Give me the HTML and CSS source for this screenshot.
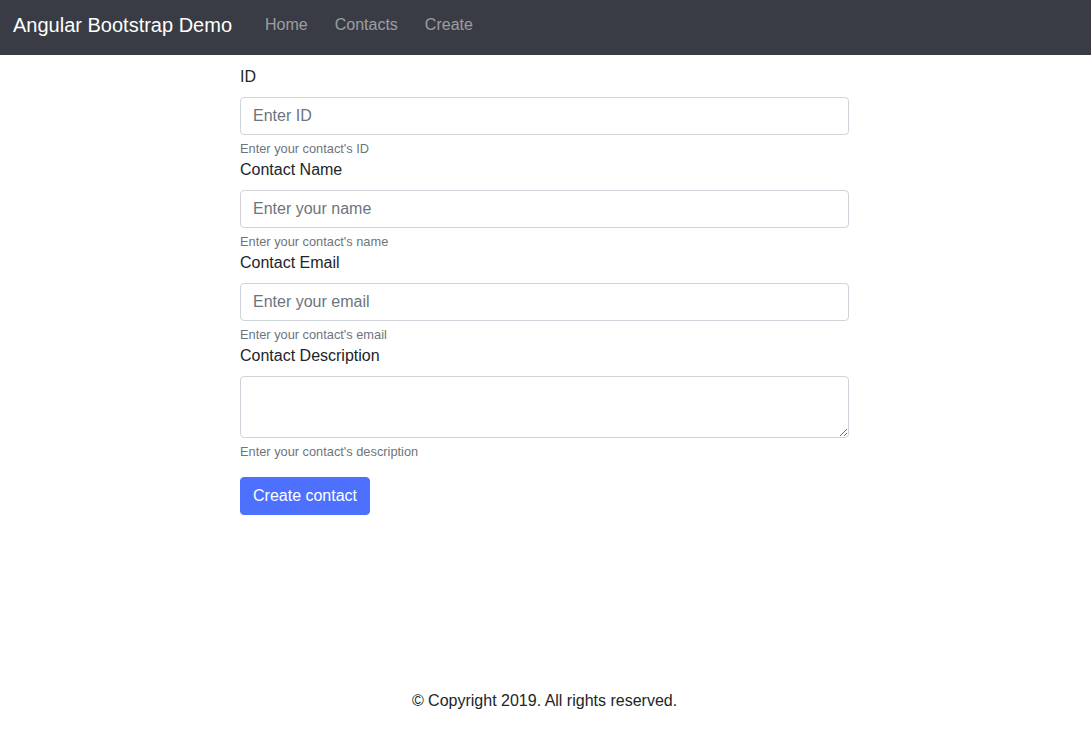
FILE: index.html
```html
<!DOCTYPE html>
<html lang="en">
<head>
<meta charset="utf-8">
<title>Angular Bootstrap Demo</title>
<link rel="stylesheet" href="styles.css">
</head>
<body>
<nav class="navbar">
  <a class="brand" href="#">Angular Bootstrap Demo</a>
  <ul class="nav">
    <li><a class="nav-link" href="#">Home</a></li>
    <li><a class="nav-link" href="#">Contacts</a></li>
    <li><a class="nav-link" href="#">Create</a></li>
  </ul>
</nav>
<main class="main">
  <form class="form">
    <div class="form-group">
      <label class="label" for="id">ID</label>
      <input class="control" id="id" type="text" placeholder="Enter ID">
      <small class="help">Enter your contact's ID</small>
    </div>
    <div class="form-group">
      <label class="label" for="name">Contact Name</label>
      <input class="control" id="name" type="text" placeholder="Enter your name">
      <small class="help">Enter your contact's name</small>
    </div>
    <div class="form-group">
      <label class="label" for="email">Contact Email</label>
      <input class="control" id="email" type="text" placeholder="Enter your email">
      <small class="help">Enter your contact's email</small>
    </div>
    <div class="form-group">
      <label class="label" for="desc">Contact Description</label>
      <textarea class="control textarea" id="desc" rows="2"></textarea>
      <small class="help">Enter your contact's description</small>
    </div>
    <button class="btn" type="button">Create contact</button>
  </form>
</main>
<footer class="footer">© Copyright 2019. All rights reserved.</footer>
</body>
</html>
```

FILE: styles.css
```css
* { box-sizing: border-box; }
html, body { margin: 0; padding: 0; }
body {
  font-family: "Liberation Sans", Arial, sans-serif;
  font-size: 16px;
  line-height: 24px;
  color: #212529;
  background: #fff;
  min-height: 100vh;
  display: flex;
  flex-direction: column;
}
.navbar {
  height: 55px;
  background: #393c44;
  display: flex;
  align-items: flex-start;
  padding: 10px 13px 0;
}
.brand {
  font-size: 20px;
  line-height: 30px;
  color: #fff;
  text-decoration: none;
  margin-right: 19.5px;
}
.nav {
  list-style: none;
  margin: 0;
  padding: 0;
  display: flex;
}
.nav-link {
  display: block;
  padding: 3px 13.5px 0;
  line-height: 24px;
  color: rgba(255, 255, 255, 0.5);
  text-decoration: none;
}
.main {
  flex: 1;
  padding: 10px 2px 0 0;
}
.form {
  width: 609px;
  margin: 0 auto;
}
.label {
  display: block;
  margin-bottom: 8px;
}
.control {
  display: block;
  width: 100%;
  height: 38px;
  padding: 6px 12px;
  font-family: inherit;
  font-size: 16px;
  line-height: 24px;
  color: #495057;
  background: #fff;
  border: 1px solid #ced4da;
  border-radius: 4px;
  margin: 0;
}
.control::placeholder { color: #6c757d; opacity: 1; }
.textarea {
  height: 62px;
  resize: vertical;
}
.help {
  display: block;
  margin-top: 4px;
  font-size: 12.8px;
  line-height: 19px;
  color: #6c757d;
}
.btn {
  margin-top: 16px;
  display: inline-block;
  font-family: inherit;
  font-size: 16px;
  line-height: 24px;
  padding: 6px 12px;
  color: #fff;
  background: #4d70ff;
  border: 1px solid #4d70ff;
  border-radius: 4px;
}
.footer {
  text-align: center;
  padding: 0 2px 31px 0;
}
```
